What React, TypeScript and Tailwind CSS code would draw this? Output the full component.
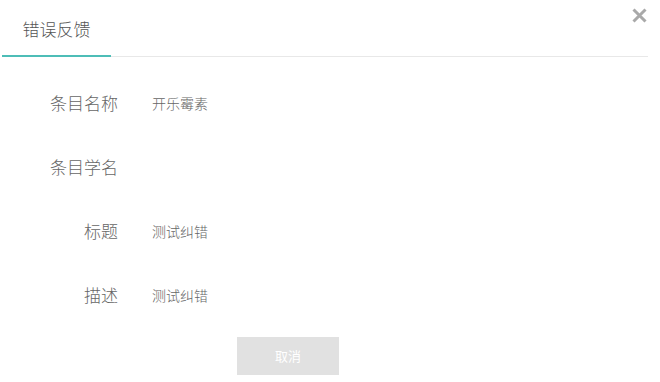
import React from 'react';

const rows = [
  { label: '条目名称', value: '开乐霉素' },
  { label: '条目学名', value: '' },
  { label: '标题', value: '测试纠错' },
  { label: '描述', value: '测试纠错' },
];

const App: React.FC = () => {
  return (
    <div
      className="relative w-[660px] h-[382px] bg-white overflow-hidden"
      style={{ fontFamily: '"Noto Sans CJK SC", "Noto Sans", sans-serif' }}
    >
      {/* close */}
      <button className="absolute top-[7px] right-[12px] text-[#a9a9a9]">
        <svg width="17" height="17" viewBox="0 0 17 17" fill="none">
          <path d="M2.5 2.5L14.5 14.5M14.5 2.5L2.5 14.5" stroke="currentColor" strokeWidth="3" />
        </svg>
      </button>

      {/* tabs */}
      <div className="flex ml-[2px] mr-[12px] h-[57px] border-b border-[#e8e8e8]">
        <div className="w-[109px] h-[57px] border-b-2 border-[#4dbdb7] -mb-px flex items-center justify-center pt-[3px] text-[17px] font-light text-[#555555]">
          错误反馈
        </div>
      </div>

      {/* form */}
      <div className="mt-[14px] flex flex-col">
        {rows.map((r) => (
          <div key={r.label} className="h-16 flex items-center">
            <div className="w-[118px] text-right text-[17px] font-light text-[#666666]">{r.label}</div>
            <div className="ml-[34px] text-[14px] font-light text-[#666666]">{r.value}</div>
          </div>
        ))}
      </div>

      <div className="mt-[10px] ml-[237px]">
        <button className="w-[102px] h-[38px] bg-[#e1e1e1] text-white text-[13px]">取消</button>
      </div>
    </div>
  );
};

export default App;
